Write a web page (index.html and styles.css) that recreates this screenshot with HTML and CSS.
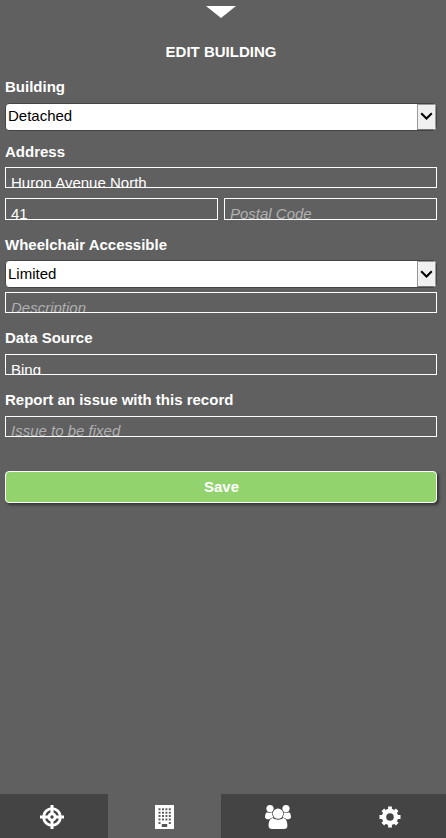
FILE: index.html
```html
<!DOCTYPE html>
<html lang="en">
<head>
<meta charset="utf-8">
<title>Edit Building</title>
<link rel="stylesheet" href="styles.css">
</head>
<body>
<main class="panel">
  <svg class="collapse" width="30" height="12" viewBox="0 0 30 12"><path d="M0 0H30L15 12Z" fill="#fff"/></svg>
  <h1 class="title">EDIT BUILDING</h1>

  <section class="group building">
    <h2 class="label">Building</h2>
    <div class="select"><span class="value">Detached</span><span class="arrow"><svg width="13" height="9" viewBox="0 0 13 9"><path d="M1.2 1.3L6.5 6.5L11.8 1.3" fill="none" stroke="#000" stroke-width="2"/></svg></span></div>
  </section>

  <section class="group address">
    <h2 class="label">Address</h2>
    <div class="field">Huron Avenue North</div>
    <div class="row">
      <div class="field tall">41</div>
      <div class="field tall hint">Postal Code</div>
    </div>
  </section>

  <section class="group access">
    <h2 class="label">Wheelchair Accessible</h2>
    <div class="select"><span class="value">Limited</span><span class="arrow"><svg width="13" height="9" viewBox="0 0 13 9"><path d="M1.2 1.3L6.5 6.5L11.8 1.3" fill="none" stroke="#000" stroke-width="2"/></svg></span></div>
    <div class="field hint">Description</div>
  </section>

  <section class="group source">
    <h2 class="label">Data Source</h2>
    <div class="field">Bing</div>
  </section>

  <section class="group issue">
    <h2 class="label">Report an issue with this record</h2>
    <div class="field hint">Issue to be fixed</div>
  </section>

  <div class="save">Save</div>
</main>

<nav class="tabs">
  <div class="tab locate">
    <svg width="24" height="24" viewBox="0 0 24 24" fill="none" stroke="#fff">
      <circle cx="12" cy="12" r="8.4" stroke-width="2.8"/>
      <circle cx="12" cy="12" r="3.2" stroke-width="3"/>
      <path d="M12 0V8M12 16V24M0 12H8M16 12H24" stroke-width="3"/>
    </svg>
  </div>
  <div class="tab active">
    <svg width="19" height="24" viewBox="0 0 19 24">
      <path d="M0 0H19V24H0Z" fill="#fff"/>
      <path d="M4.5 3.2V19M8 3.2V16.5M11.4 3.2V16.5M14.8 3.2V19" stroke="#606060" stroke-width="2" stroke-dasharray="2 1.45" fill="none"/>
      <path d="M6.8 19H12.2V22H6.8Z" fill="#555"/>
    </svg>
  </div>
  <div class="tab people">
    <svg width="26" height="24" viewBox="0 0 26 24" fill="#fff">
      <circle cx="5" cy="3.6" r="3.6"/><circle cx="21" cy="3.6" r="3.6"/>
      <path d="M1.8 7.2Q4.5 8.5 7.2 7.2Q6.8 10.5 8.5 12.2Q5.8 12.8 4.4 14.3Q0 14.4 0 12Q0 8.2 1.8 7.2Z"/>
      <path d="M24.2 7.2Q21.5 8.5 18.8 7.2Q19.2 10.5 17.5 12.2Q20.2 12.8 21.6 14.3Q26 14.4 26 12Q26 8.2 24.2 7.2Z"/>
      <circle cx="13" cy="8.6" r="5.2"/>
      <path d="M7.5 13Q13 16.5 18.5 13C21.5 13.8 22.5 17.5 22.4 21Q22.3 24 19 24H7Q3.7 24 3.6 21C3.5 17.5 4.5 13.8 7.5 13Z"/>
    </svg>
  </div>
  <div class="tab settings">
    <svg width="22" height="22" viewBox="0 0 22 22">
      <g fill="none" stroke="#fff">
        <circle cx="11" cy="11" r="6" stroke-width="4.4"/>
        <path d="M11 0.5V4M11 18V21.5M0.5 11H4M18 11H21.5M3.8 3.8L6 6M16 16L18.2 18.2M18.2 3.8L16 6M6 16L3.8 18.2" stroke-width="3.8"/>
      </g>
    </svg>
  </div>
</nav>
</body>
</html>
```
FILE: styles.css
```css
* { box-sizing: border-box; }

body {
  margin: 0;
  height: 838px;
  display: flex;
  flex-direction: column;
  background: #606060;
  color: #fff;
  font: 15px/17px "Liberation Sans", Arial, sans-serif;
  overflow: hidden;
}

.panel {
  flex: 1;
  display: flex;
  flex-direction: column;
  padding: 6px 9px 0 5px;
}

.collapse { display: block; align-self: center; }

.title {
  margin: 25px 0 0;
  font-size: 15px;
  text-align: center;
}

.label {
  margin: 0;
  font-size: 15px;
}

.building { margin-top: 18px; }
.address { margin-top: 12px; }
.access { margin-top: 16px; }
.source { margin-top: 16px; }
.issue { margin-top: 16px; }

.select {
  display: flex;
  height: 28px;
  margin-top: 8px;
  border: 1px solid #444;
  border-radius: 4px;
  background: #fff;
  color: #000;
  overflow: hidden;
}

.value { flex: 1; padding: 3px 2px 0; }

.arrow {
  display: flex;
  align-items: center;
  justify-content: center;
  width: 19px;
  padding-bottom: 2px;
  border: 1px solid #999;
  border-bottom-color: #777;
  background: #f0f0f0;
}

.field {
  height: 21px;
  margin-top: 7px;
  padding: 6px 5px 0;
  border: 1px solid #fff;
  overflow: hidden;
  white-space: nowrap;
}

.hint { color: #b0b0b0; font-style: italic; }

.row {
  display: grid;
  grid-template-columns: 1fr 1fr;
  gap: 6px;
  margin-top: 10px;
}

.row .field { height: 22px; margin-top: 0; }

.access .select { margin-top: 7px; }
.access .value { padding-top: 4px; }
.access .arrow { padding-bottom: 0; }
.access .field { margin-top: 4px; }
.source .field,
.issue .field { margin-top: 8px; }
.issue .field { padding-top: 5px; }

.save {
  height: 32px;
  margin-top: 34px;
  padding-left: 1px;
  border: 1px solid #fff;
  border-radius: 4px;
  background: #92d36e;
  box-shadow: 2px 2px 3px #333;
  font-weight: bold;
  line-height: 30px;
  text-align: center;
}

.tabs {
  display: grid;
  grid-template-columns: 108px 113px 113px 112px;
  height: 44px;
}

.tab {
  display: flex;
  align-items: center;
  justify-content: center;
  background: #444;
  padding-top: 2px;
}

.locate { padding-right: 4px; }
.active { background: #606060; }
```
